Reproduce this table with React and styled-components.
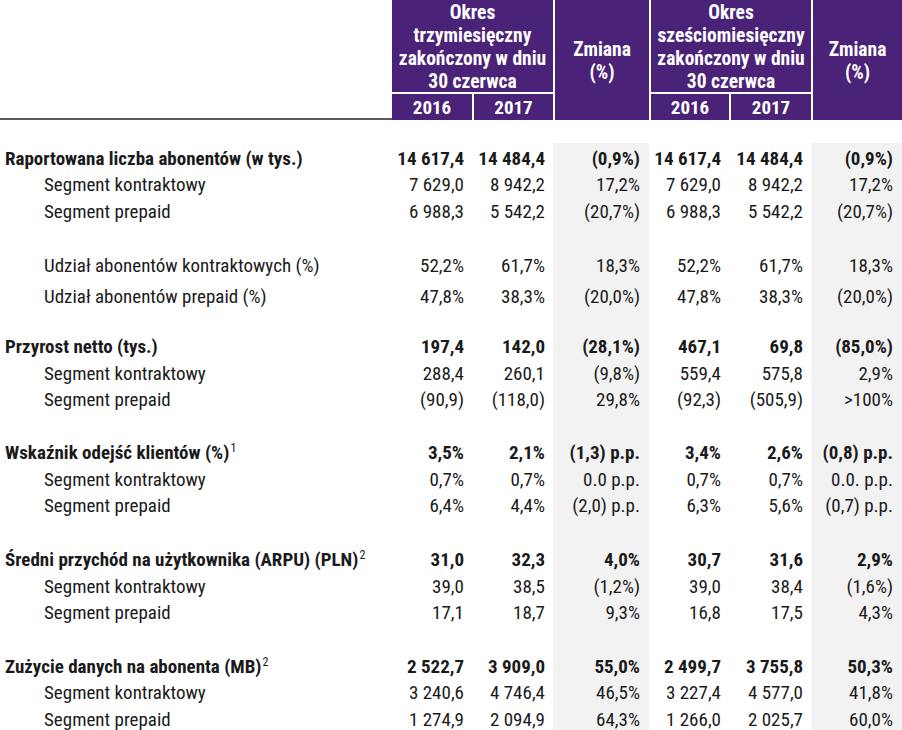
import React from "react";
import styled, { createGlobalStyle } from "styled-components";

const COLS = "392px 80px 81px 96px 80px 82px 91px";
const PURPLE = "#4a2379";
const GREY = "#f2f2f2";

const Global = createGlobalStyle`
	body {
		margin: 0;
		background: #ffffff;
		font-family: "Roboto Condensed", "Liberation Sans Narrow", "DejaVu Sans Condensed", Roboto, sans-serif;
		font-stretch: condensed;
		color: #1a1a1a;
	}
`;

const Page = styled.div`
	width: 902px;
`;

const Head = styled.div`
	display: grid;
	grid-template-columns: ${COLS};
	grid-template-rows: 92px 28px;
`;

const LabelHead = styled.div`
	grid-column: 1;
	grid-row: 1 / 3;
	border-bottom: 2px solid #5c5c5c;
`;

const PeriodHead = styled.div`
	grid-column: ${(p) => p.col} / span 2;
	grid-row: 1;
	background: ${PURPLE};
	color: #ffffff;
	font-weight: 700;
	font-size: 19.5px;
	line-height: 23px;
	text-align: center;
	display: flex;
	flex-direction: column;
	justify-content: center;
	padding-top: 2px;
	border-left: ${(p) => (p.gap ? "2px solid #fff" : "none")};
`;

const YearHead = styled.div`
	grid-row: 2;
	background: ${PURPLE};
	color: #ffffff;
	font-weight: 700;
	font-size: 19px;
	display: flex;
	align-items: center;
	justify-content: center;
	border-top: 2px solid #ffffff;
	border-left: ${(p) => (p.gap ? `${p.gap}px solid #fff` : "none")};
`;

const ChangeHead = styled.div`
	grid-row: 1 / 3;
	background: ${PURPLE};
	color: #ffffff;
	font-weight: 700;
	font-size: 19.5px;
	line-height: 23px;
	text-align: center;
	display: flex;
	flex-direction: column;
	justify-content: center;
	padding-top: 2px;
	border-left: 2px solid #ffffff;
`;

const Spacer = styled.div`
	height: 23px;
`;

const Row = styled.div`
	display: grid;
	grid-template-columns: ${COLS};
	height: ${(p) => p.h || 26.7}px;
	font-size: 19px;
	line-height: 1;
	font-weight: ${(p) => (p.bold ? 700 : 400)};
`;

const Cell = styled.div`
	display: flex;
	align-items: center;
	white-space: nowrap;
	padding-top: ${(p) => p.pt || 0}px;
`;

const Label = styled(Cell)`
	padding-left: ${(p) => (p.sub ? 44 : 5)}px;
`;

const Num = styled(Cell)`
	justify-content: flex-end;
	padding-right: 8px;
`;

const Change = styled(Num)`
	background: ${GREY};
	padding-right: 9px;
`;

const Sup = styled.span`
	align-self: flex-start;
	font-size: 12px;
	font-weight: 400;
	margin-top: 3px;
	margin-left: 1px;
`;

const rows = [
	{ label: "Raportowana liczba abonentów (w tys.)", bold: true, h: 28, pt: 2, v: ["14 617,4", "14 484,4", "(0,9%)", "14 617,4", "14 484,4", "(0,9%)"] },
	{ label: "Segment kontraktowy", sub: true, v: ["7 629,0", "8 942,2", "17,2%", "7 629,0", "8 942,2", "17,2%"] },
	{ label: "Segment prepaid", sub: true, v: ["6 988,3", "5 542,2", "(20,7%)", "6 988,3", "5 542,2", "(20,7%)"] },
	{ blank: true, h: 27 },
	{ label: "Udział abonentów kontraktowych (%)", sub: true, h: 28, v: ["52,2%", "61,7%", "18,3%", "52,2%", "61,7%", "18,3%"] },
	{ label: "Udział abonentów prepaid (%)", sub: true, h: 34, v: ["47,8%", "38,3%", "(20,0%)", "47,8%", "38,3%", "(20,0%)"] },
	{ blank: true, h: 19 },
	{ label: "Przyrost netto (tys.)", bold: true, h: 28, v: ["197,4", "142,0", "(28,1%)", "467,1", "69,8", "(85,0%)"] },
	{ label: "Segment kontraktowy", sub: true, h: 25.5, v: ["288,4", "260,1", "(9,8%)", "559,4", "575,8", "2,9%"] },
	{ label: "Segment prepaid", sub: true, v: ["(90,9)", "(118,0)", "29,8%", "(92,3)", "(505,9)", ">100%"] },
	{ blank: true },
	{ label: "Wskaźnik odejść klientów (%)", note: "1", bold: true, v: ["3,5%", "2,1%", "(1,3) p.p.", "3,4%", "2,6%", "(0,8) p.p."] },
	{ label: "Segment kontraktowy", sub: true, v: ["0,7%", "0,7%", "0.0 p.p.", "0,7%", "0,7%", "0.0. p.p."] },
	{ label: "Segment prepaid", sub: true, v: ["6,4%", "4,4%", "(2,0) p.p.", "6,3%", "5,6%", "(0,7) p.p."] },
	{ blank: true },
	{ label: "Średni przychód na użytkownika (ARPU) (PLN)", note: "2", bold: true, v: ["31,0", "32,3", "4,0%", "30,7", "31,6", "2,9%"] },
	{ label: "Segment kontraktowy", sub: true, v: ["39,0", "38,5", "(1,2%)", "39,0", "38,4", "(1,6%)"] },
	{ label: "Segment prepaid", sub: true, v: ["17,1", "18,7", "9,3%", "16,8", "17,5", "4,3%"] },
	{ blank: true },
	{ label: "Zużycie danych na abonenta (MB)", note: "2", bold: true, v: ["2 522,7", "3 909,0", "55,0%", "2 499,7", "3 755,8", "50,3%"] },
	{ label: "Segment kontraktowy", sub: true, v: ["3 240,6", "4 746,4", "46,5%", "3 227,4", "4 577,0", "41,8%"] },
	{ label: "Segment prepaid", sub: true, v: ["1 274,9", "2 094,9", "64,3%", "1 266,0", "2 025,7", "60,0%"] },
];

const DataRow = ({ r }) => {
	if (r.blank) {
		return (
			<Row h={r.h}>
				<Cell />
				<Cell />
				<Cell />
				<Change />
				<Cell />
				<Cell />
				<Change />
			</Row>
		);
	}
	return (
		<Row h={r.h} bold={r.bold}>
			<Label sub={r.sub} pt={r.pt}>
				{r.label}
				{r.note && <Sup>{r.note}</Sup>}
			</Label>
			{r.v.map((val, i) =>
				i === 2 || i === 5 ? (
					<Change key={i} pt={r.pt}>{val}</Change>
				) : (
					<Num key={i} pt={r.pt}>{val}</Num>
				)
			)}
		</Row>
	);
};

const App = () => {
	return (
		<Page>
			<Global />
			<Head>
				<LabelHead />
				<PeriodHead col={2}>
					<span>Okres</span>
					<span>trzymiesięczny</span>
					<span>zakończony w dniu</span>
					<span>30 czerwca</span>
				</PeriodHead>
				<YearHead style={{ gridColumn: 2 }}>2016</YearHead>
				<YearHead style={{ gridColumn: 3 }} gap={2}>2017</YearHead>
				<ChangeHead style={{ gridColumn: 4 }}>
					<span>Zmiana</span>
					<span>(%)</span>
				</ChangeHead>
				<PeriodHead col={5} gap>
					<span>Okres</span>
					<span>sześciomiesięczny</span>
					<span>zakończony w dniu</span>
					<span>30 czerwca</span>
				</PeriodHead>
				<YearHead style={{ gridColumn: 5 }} gap={2}>2016</YearHead>
				<YearHead style={{ gridColumn: 6 }} gap={2}>2017</YearHead>
				<ChangeHead style={{ gridColumn: 7 }}>
					<span>Zmiana</span>
					<span>(%)</span>
				</ChangeHead>
			</Head>
			<Spacer />
			{rows.map((r, i) => (
				<DataRow key={i} r={r} />
			))}
		</Page>
	);
};

export default App;
